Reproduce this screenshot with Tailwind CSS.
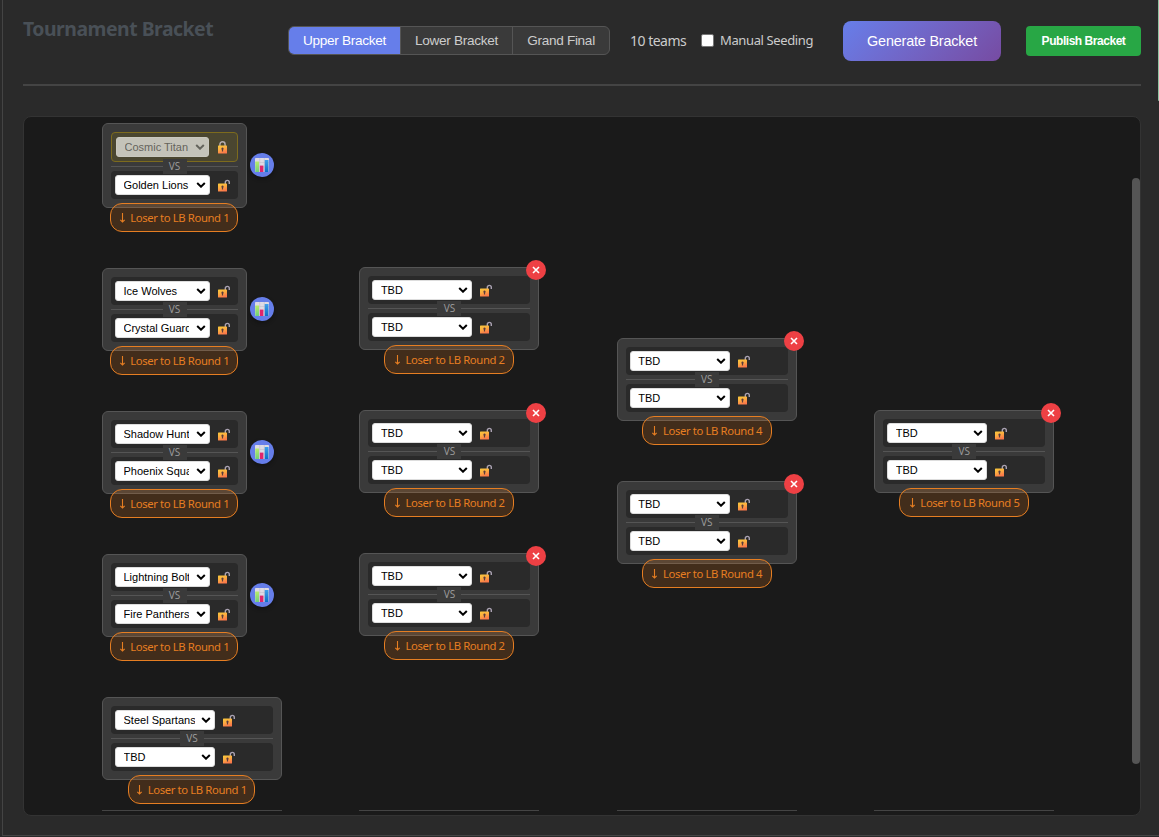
<!DOCTYPE html>
<html lang="en">
<head>
<meta charset="utf-8">
<title>Tournament Bracket</title>
<script src="https://cdn.jsdelivr.net/npm/@tailwindcss/browser@4"></script>
</head>
<body class="h-[837px] w-[1159px] overflow-hidden bg-[#2a2a2a] font-['Noto_Sans','Open_Sans',sans-serif] text-[#ccc]">
<svg class="absolute size-0">
  <defs>
    <linearGradient id="gold" x1="0" y1="0" x2="0.4" y2="1"><stop offset="0" stop-color="#f9c93c"/><stop offset="0.5" stop-color="#fcae40"/><stop offset="1" stop-color="#fb7a4a"/></linearGradient>
    <linearGradient id="gGreen" x1="0" y1="0" x2="0" y2="1"><stop offset="0" stop-color="#b8ec6a"/><stop offset="1" stop-color="#6fd07a"/></linearGradient>
    <linearGradient id="gBlue" x1="0" y1="0" x2="0" y2="1"><stop offset="0" stop-color="#3fa0ea"/><stop offset="1" stop-color="#0b6fc8"/></linearGradient>
  </defs>
  <symbol id="unlocked" viewBox="0 0 13 13">
    <path d="M7.300 5.500V3.400a2 2 0 0 1 4 0V5" fill="none" stroke="#aaa2b2" stroke-width="1.400"/>
    <rect x="0" y="4.500" width="9" height="8" rx="0.600" fill="url(#gold)"/>
    <path d="M4.500 6.500a1.200 1.200 0 0 1 .6 2.200v1.800H3.900V8.700A1.200 1.200 0 0 1 4.500 6.500z" fill="#5a3a3c"/>
  </symbol>
  <symbol id="locked" viewBox="0 0 13 13">
    <path d="M2.900 5.500V3.400a2.600 2.600 0 0 1 5.200 0V5.500" fill="none" stroke="#b5adb0" stroke-width="1.400"/>
    <rect x="1" y="4.500" width="9" height="8" rx="0.600" fill="url(#gold)"/>
    <path d="M5.500 6.500a1.200 1.200 0 0 1 .6 2.200v1.800H4.900V8.700A1.200 1.200 0 0 1 5.500 6.500z" fill="#5a3a3c"/>
  </symbol>
  <symbol id="chart" viewBox="0 0 14 14">
    <rect x="0" y="0" width="14" height="14" rx="0.800" fill="#dedbe4"/>
    <path d="M0 4.500H14M0 9H14M4.700 0V14M9.300 0V14" stroke="#c3bfcd" stroke-width="0.600"/>
    <rect x="0.300" y="3.500" width="3.700" height="10.500" fill="url(#gGreen)"/>
    <rect x="4.900" y="7.600" width="3.500" height="6.400" fill="#e0256c"/>
    <rect x="9.700" y="2" width="3.800" height="12" fill="url(#gBlue)"/>
  </symbol>
</svg>

<div class="relative h-[836px] border-b border-l border-[#444] ml-[2px] pl-[20px] pr-[18px]">
  <header class="flex h-[86px] items-start border-b-2 border-[#444]">
    <h1 class="mt-[14px] w-[265px] whitespace-nowrap text-[19.4px] leading-[30px] font-bold tracking-[-0.48px] text-[#495057]">Tournament Bracket</h1>
    <div class="mt-[26px] flex h-[29px] overflow-hidden rounded-[6px] border border-[#555] bg-[#3a3a3a] font-['Liberation_Sans',sans-serif] text-[13.6px] leading-[27px] tracking-[-0.3px] whitespace-nowrap">
      <div class="w-[111px] bg-[#667eea] text-center text-white">Upper Bracket</div>
      <div class="w-[112px] border-l border-[#555] text-center">Lower Bracket</div>
      <div class="w-[97px] border-l border-[#555] text-center">Grand Final</div>
    </div>
    <div class="mt-[31px] ml-[20px] w-[71px] whitespace-nowrap text-[14px] leading-[20px] tracking-[-0.500px]">10 teams</div>
    <div class="mt-[34px] size-[13px] rounded-[2px] border border-[#767676] bg-white"></div>
    <div class="mt-[30px] ml-[6px] w-[123px] whitespace-nowrap text-[13px] leading-[20px] tracking-[-0.380px]">Manual Seeding</div>
    <div class="mt-[21px] h-[40px] w-[158px] rounded-[8px] bg-linear-135 from-[#667eea] to-[#764ba2] text-center font-['Liberation_Sans',sans-serif] text-[14.4px] leading-[40px] tracking-[-0.180px] text-white">Generate Bracket</div>
    <div class="mt-[26px] ml-[25px] h-[30px] w-[115px] rounded-[4px] bg-[#28a745] text-center font-['Liberation_Sans',sans-serif] text-[12px] font-bold leading-[30px] tracking-[-0.460px] text-white">Publish Bracket</div>
  </header>

  <main class="relative mt-[30px] h-[700px] w-[1118px] overflow-hidden rounded-[8px] border border-[#333] bg-[#1a1a1a] pt-[6px] pl-[78px]">
    <div id="rounds" class="flex gap-[77.400px]"></div>
    <div class="absolute top-[61px] right-0 h-[586px] w-[8px] rounded-[4px] bg-[#555]"></div>
  </main>
</div>
<div class="absolute top-0 right-0 h-[101px] w-[1px] rounded-bl-[1px] bg-[#8fc3a2]"></div>

<script>
const slot = (name, narrow, locked) => `
  <div class="flex items-center ${locked ? 'h-[30px] border border-[#7d6b1d] bg-[#4a4630] pl-[4px]' : 'h-[28px] bg-[#2a2a2a] pl-[4px]'} rounded-[4px]">
    <div class="flex h-[20px] shrink-0 items-center justify-between rounded-[3px] border pr-[3px] pl-[7.500px] font-['Liberation_Sans',sans-serif] text-[11px] ${locked ? 'w-[93px] border-[#c9c8bf] bg-[#c4c3b9] text-[#64645c]' : narrow ? 'w-[95px] border-[#ddd] bg-white text-black' : 'w-[100px] border-[#ddd] bg-white text-black'}">
      <span class="overflow-hidden whitespace-nowrap leading-[18px] ${locked ? 'w-[64px]' : narrow ? 'w-[65px]' : 'w-[71px]'}">${name}</span>
      <svg class="h-[6px] w-[10px] shrink-0" viewBox="0 0 10 6"><path d="M1.200 1 5 4.700 8.800 1" fill="none" stroke="currentColor" stroke-width="2"/></svg>
    </div>
    <svg class="ml-[8px] size-[13px] shrink-0"><use href="${locked ? '#locked' : '#unlocked'}"/></svg>
  </div>`;

const card = ({ a, b, lb, kind, locked }) => `
  <div class="relative shrink-0 rounded-[6px] border border-[#555] bg-[#3a3a3a] p-[8px] ${kind === 'chart' ? 'w-[145px]' : 'w-[180px]'}">
    ${slot(a, kind === 'chart', locked)}
    <div class="flex h-[9px] items-center">
      <div class="h-px flex-1 bg-[#555]"></div>
      <div class="z-10 h-[15px] w-[24px] bg-[#3a3a3a] text-center text-[10px] leading-[14px] text-[#999]">VS</div>
      <div class="h-px flex-1 bg-[#555]"></div>
    </div>
    ${slot(b, kind === 'chart', false)}
    <div class="absolute -bottom-[25px] z-20 flex h-[29px] items-center justify-center rounded-[12px] border border-[#e67e22] bg-[#e67e22]/20 pt-[1px] text-[11.300px] tracking-[-0.380px] whitespace-nowrap text-[#e67e22] ${kind === 'chart' ? 'left-[7px] w-[128px]' : kind === 'x' ? 'left-[24px] w-[130px]' : 'left-[25px] w-[127px]'}"><svg class="mr-[4.500px] mb-[1px] h-[10px] w-[7px]" viewBox="0 0 7 10"><path d="M3.500 0V9M1.300 6.900 3.500 9 5.700 6.900" fill="none" stroke="currentColor" stroke-width="1.100"/></svg>Loser to LB Round ${lb}</div>
    ${kind === 'chart' ? `<div class="absolute top-[calc(50%-1px)] -right-[28px] flex size-[24px] -translate-y-1/2 items-center justify-center rounded-full bg-[#667eea] shadow-[0_2px_4px_rgba(0,0,0,0.3)]"><svg class="size-[14px]"><use href="#chart"/></svg></div>` : ''}
    ${kind === 'x' ? `<div class="absolute -top-[8px] -right-[8px] flex size-[20px] items-center justify-center rounded-full bg-[#ee4044] text-white"><svg class="size-[8px]" viewBox="0 0 8 8"><path d="M1 1 7 7M7 1 1 7" stroke="currentColor" stroke-width="1.600"/></svg></div>` : ''}
  </div>`;

const tbd = lb => ({ a: 'TBD', b: 'TBD', lb, kind: 'x' });
const rounds = [
  [
    { a: 'Cosmic Titan', b: 'Golden Lions', lb: 1, kind: 'chart', locked: true },
    { a: 'Ice Wolves', b: 'Crystal Guardians', lb: 1, kind: 'chart' },
    { a: 'Shadow Hunters', b: 'Phoenix Squad', lb: 1, kind: 'chart' },
    { a: 'Lightning Bolts', b: 'Fire Panthers', lb: 1, kind: 'chart' },
    { a: 'Steel Spartans', b: 'TBD', lb: 1, kind: 'plain' },
  ],
  [tbd(2), tbd(2), tbd(2)],
  [tbd(4), tbd(4)],
  [tbd(5)],
];
document.getElementById('rounds').innerHTML = rounds.map((r, i) =>
  `<section class="flex h-[688px] w-[180px] shrink-0 flex-col justify-center gap-[60px] border-b border-[#444] ${i === 2 ? 'pb-[30.200px]' : 'pb-[30px]'}">${r.map(card).join('')}</section>`).join('');
</script>
</body>
</html>
